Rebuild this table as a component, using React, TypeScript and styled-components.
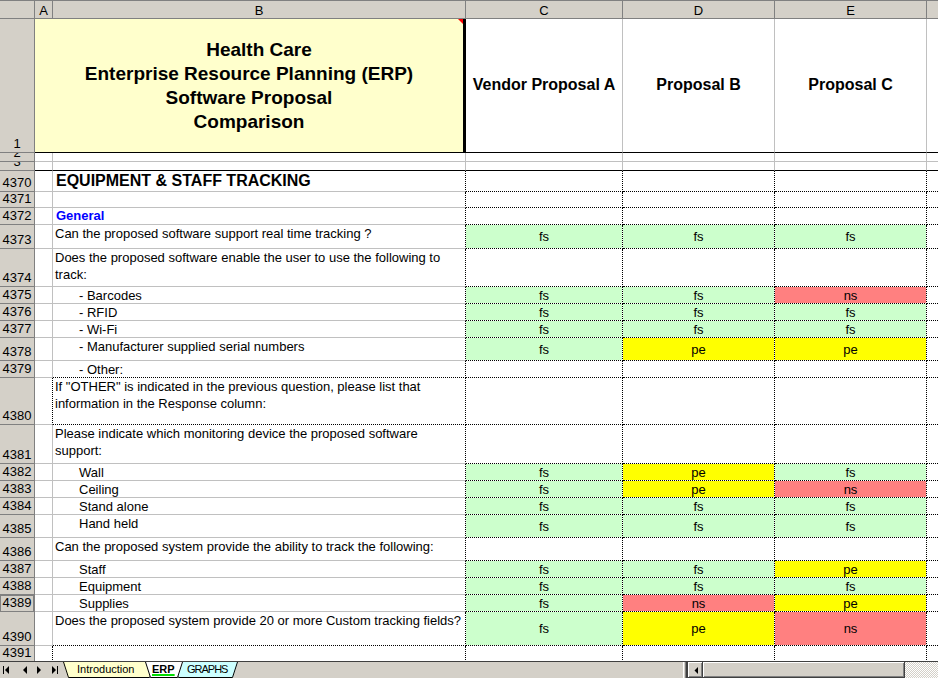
import React from 'react';
import styled, { createGlobalStyle } from 'styled-components';

const GlobalStyle = createGlobalStyle`
  *, *::before, *::after { box-sizing: border-box; }
  html, body { margin: 0; padding: 0; background: #ffffff; }
  body { font-family: "Liberation Sans", Arial, sans-serif; color: #000; overflow: hidden; }
  #root { width: 938px; height: 678px; }
`;

const COLS = '35px 18px 413px 157px 152px 152px 1fr';
const FACE = '#d4d0c8';

const lines = {
  grid: '1px solid #c0c0c0',
  dot: '1px dotted #000000',
  black: '1px solid #000000',
  none: '0 none',
};
type Line = keyof typeof lines;

const FILLS: Record<string, string> = {
  fs: '#ccffcc',
  pe: '#ffff00',
  ns: '#ff8080',
};

const Window = styled.div`
  width: 938px;
  height: 678px;
  display: flex;
  flex-direction: column;
  overflow: hidden;
  background: #ffffff;
`;

const Sheet = styled.div`
  height: 661px;
  flex: none;
  display: flex;
  flex-direction: column;
  overflow: hidden;
  border-top: 1px solid #808080;
`;

const GridRow = styled.div<{ $h: number }>`
  display: grid;
  grid-template-columns: ${COLS};
  height: ${(p) => p.$h}px;
  flex: none;
`;

const ColHead = styled.div<{ $last?: boolean }>`
  background: ${FACE};
  border-right: ${(p) => (p.$last ? '0 none' : '1px solid #808080')};
  border-bottom: 1px solid #808080;
  font-size: 13px;
  line-height: 17px;
  padding-top: 1px;
  text-align: center;
  overflow: hidden;
`;

const RowHead = styled.div<{ $selected?: boolean }>`
  background: ${FACE};
  border-right: 1px solid #808080;
  border-bottom: 1px solid #808080;
  font-size: 13px;
  line-height: 16px;
  display: flex;
  align-items: flex-end;
  justify-content: center;
  overflow: hidden;
  box-shadow: ${(p) => (p.$selected ? 'inset 1px 1px 0 #808080, inset -1px 0 0 #808080' : 'none')};
`;

const Cell = styled.div<{ $r?: Line; $b?: Line; $fill?: string }>`
  overflow: hidden;
  min-width: 0;
  border-right: ${(p) => lines[p.$r ?? 'grid']};
  border-bottom: ${(p) => lines[p.$b ?? 'grid']};
  background-color: ${(p) => p.$fill ?? 'transparent'};
  background-clip: padding-box;
`;

type Kind = 'section' | 'sub' | 'q' | 'item';

const TextCell = styled(Cell)<{ $kind?: Kind }>`
  white-space: pre;
  font-size: ${(p) => (p.$kind === 'section' ? 16 : 13)}px;
  font-weight: ${(p) => (p.$kind === 'section' || p.$kind === 'sub' ? 700 : 400)};
  color: ${(p) => (p.$kind === 'sub' ? '#0000ff' : '#000')};
  line-height: ${(p) => (p.$kind === 'section' ? 20 : p.$kind === 'sub' ? 16 : 17)}px;
  padding-left: ${(p) => (p.$kind === 'item' ? 26 : p.$kind === 'q' ? 2 : 3)}px;
`;

const ValueCell = styled(Cell)`
  display: flex;
  align-items: center;
  justify-content: center;
  font-size: 13px;
  line-height: 15px;
`;

const TitleCell = styled.div`
  position: relative;
  grid-column: span 2;
  background: #ffffcc;
  border-right: 3px solid #000;
  border-bottom: 1px solid #000;
  display: flex;
  flex-direction: column;
  align-items: center;
  justify-content: center;
  font-size: 19px;
  font-weight: 700;
  line-height: 24px;
  padding-top: 1px;
  &::after {
    content: '';
    position: absolute;
    top: 0;
    right: 0;
    border-top: 5px solid #ff0000;
    border-left: 5px solid transparent;
  }
`;

const TitleLine = styled.div<{ $shift?: number }>`
  white-space: nowrap;
  margin-left: ${(p) => p.$shift ?? 0}px;
`;

const ProposalHead = styled(Cell)`
  display: flex;
  align-items: center;
  justify-content: center;
  font-size: 16px;
  font-weight: 700;
  white-space: nowrap;
  padding-bottom: 1px;
`;

/* ---------- bottom bar ---------- */

const TabBar = styled.div`
  height: 17px;
  flex: none;
  display: flex;
  align-items: stretch;
  background: ${FACE};
  border-top: 1px solid #404040;
`;

const Nav = styled.div`
  width: 63px;
  flex: none;
  display: flex;
  align-items: center;
  padding-left: 3px;
  padding-bottom: 1px;
`;

const NavButton = styled.span<{ $ml: number }>`
  display: flex;
  margin-left: ${(p) => p.$ml}px;
`;

const Tabs = styled.div`
  display: flex;
  flex: none;
`;

const Tab = styled.div<{ $w: number; $ml: number; $z: number }>`
  position: relative;
  flex: none;
  width: ${(p) => p.$w}px;
  height: 16px;
  margin-left: ${(p) => p.$ml}px;
  z-index: ${(p) => p.$z};
`;

const TabShape = styled.svg`
  position: absolute;
  left: 0;
  top: 0;
`;

const TabLabel = styled.span<{ $pl: number; $active?: boolean; $ls?: number }>`
  position: relative;
  display: block;
  padding-left: ${(p) => p.$pl}px;
  font-size: 11px;
  line-height: 15px;
  letter-spacing: ${(p) => p.$ls ?? 0}px;
  font-weight: ${(p) => (p.$active ? 700 : 400)};
  white-space: nowrap;
  text-decoration: ${(p) => (p.$active ? 'underline' : 'none')};
  text-decoration-color: #00dd00;
  text-decoration-thickness: 2px;
  text-underline-offset: 1px;
`;

const Spacer = styled.div`
  flex: 1;
`;

const ScrollArea = styled.div`
  width: 255px;
  flex: none;
  display: flex;
  align-items: stretch;
`;

const Splitter = styled.div`
  width: 5px;
  flex: none;
  border-left: 1px solid #ffffff;
  border-right: 2px solid #404040;
  background: ${FACE};
  box-shadow: inset -1px 0 0 #808080;
`;

const ScrollButton = styled.div`
  width: 15px;
  flex: none;
  display: flex;
  align-items: center;
  justify-content: center;
  background: ${FACE};
  box-shadow: inset -1px -1px 0 #404040, inset 1px 1px 0 #ffffff, inset -2px -2px 0 #808080;
`;

const Thumb = styled.div`
  width: 202px;
  flex: none;
  background: ${FACE};
  box-shadow: inset -1px -1px 0 #404040, inset 1px 1px 0 #ffffff, inset -2px -2px 0 #808080;
`;

const Track = styled.div`
  flex: 1;
  background: repeating-conic-gradient(#ffffff 0 25%, ${FACE} 0 50%) 0 0 / 2px 2px;
`;

/* ---------- data ---------- */

type V = 'fs' | 'pe' | 'ns';
interface RowData {
  n: number;
  h: number;
  kind?: Kind;
  text?: string;
  vals?: V[];
  dotBottom?: boolean;
  dotLeft?: boolean;
  selected?: boolean;
}

const rows: RowData[] = [
  { n: 4370, h: 21, kind: 'section', text: 'EQUIPMENT & STAFF TRACKING' },
  { n: 4371, h: 16 },
  { n: 4372, h: 17, kind: 'sub', text: 'General' },
  { n: 4373, h: 24, kind: 'q', text: 'Can the proposed software support real time tracking ?', vals: ['fs', 'fs', 'fs'] },
  { n: 4374, h: 38, kind: 'q', text: 'Does the proposed software enable the user to use the following to\ntrack:' },
  { n: 4375, h: 17, kind: 'item', text: '- Barcodes', vals: ['fs', 'fs', 'ns'] },
  { n: 4376, h: 17, kind: 'item', text: '- RFID', vals: ['fs', 'fs', 'fs'] },
  { n: 4377, h: 17, kind: 'item', text: '- Wi-Fi', vals: ['fs', 'fs', 'fs'] },
  { n: 4378, h: 23, kind: 'item', text: '- Manufacturer supplied serial numbers', vals: ['fs', 'pe', 'pe'] },
  { n: 4379, h: 17, kind: 'item', text: '- Other:', dotBottom: true },
  {
    n: 4380,
    h: 47,
    kind: 'q',
    text: 'If "OTHER" is indicated in the previous question, please list that\ninformation in the Response column:',
    dotBottom: true,
    dotLeft: true,
  },
  { n: 4381, h: 39, kind: 'q', text: 'Please indicate which monitoring device the proposed software\nsupport:' },
  { n: 4382, h: 17, kind: 'item', text: 'Wall', vals: ['fs', 'pe', 'fs'] },
  { n: 4383, h: 17, kind: 'item', text: 'Ceiling', vals: ['fs', 'pe', 'ns'] },
  { n: 4384, h: 17, kind: 'item', text: 'Stand alone', vals: ['fs', 'fs', 'fs'] },
  { n: 4385, h: 23, kind: 'item', text: 'Hand held', vals: ['fs', 'fs', 'fs'] },
  { n: 4386, h: 23, kind: 'q', text: 'Can the proposed system provide the ability to track the following:' },
  { n: 4387, h: 17, kind: 'item', text: 'Staff', vals: ['fs', 'fs', 'pe'] },
  { n: 4388, h: 17, kind: 'item', text: 'Equipment', vals: ['fs', 'fs', 'fs'] },
  { n: 4389, h: 17, kind: 'item', text: 'Supplies', vals: ['fs', 'ns', 'pe'], selected: true },
  {
    n: 4390,
    h: 34,
    kind: 'q',
    text: 'Does the proposed system provide 20 or more Custom tracking fields?',
    vals: ['fs', 'pe', 'ns'],
    dotBottom: true,
  },
  { n: 4391, h: 16, dotLeft: true },
];

const NavIcon = ({ dir, bar }: { dir: 'l' | 'r'; bar?: boolean }) => (
  <svg width="7" height="8" viewBox="0 0 7 8">
    {dir === 'l' ? (
      <>
        {bar && <rect x="0" y="0" width="1" height="8" fill="#000" />}
        <polygon points="6,0 6,8 2,4" fill="#000" />
      </>
    ) : (
      <>
        <polygon points="1,0 1,8 5,4" fill="#000" />
        {bar && <rect x="6" y="0" width="1" height="8" fill="#000" />}
      </>
    )}
  </svg>
);

const TabOutline = ({ w, fill }: { w: number; fill: string }) => (
  <TabShape width={w} height={16} viewBox={`0 0 ${w} 16`}>
    <polygon points={`0,0 ${w},0 ${w - 5},15.5 5,15.5`} fill={fill} />
    <polyline
      points={`0.5,0 5.5,15.5 ${w - 5.5},15.5 ${w - 0.5},0`}
      fill="none"
      stroke="#000"
      strokeWidth="1"
    />
  </TabShape>
);

const DataRow = ({ r }: { r: RowData }) => {
  const v = r.vals ?? [];
  return (
    <GridRow $h={r.h}>
      <RowHead $selected={r.selected}>{r.n}</RowHead>
      <Cell $r={r.dotLeft ? 'dot' : 'grid'} />
      <TextCell $kind={r.kind} $r="dot" $b={r.dotBottom ? 'dot' : 'grid'}>
        {r.text}
      </TextCell>
      {[0, 1, 2].map((i) => (
        <ValueCell key={i} $r="dot" $b="dot" $fill={v[i] ? FILLS[v[i]] : undefined}>
          {v[i] ?? ''}
        </ValueCell>
      ))}
      <Cell $r="none" $b="dot" />
    </GridRow>
  );
};

export default function App() {
  return (
    <>
      <GlobalStyle />
      <Window>
        <Sheet>
          <GridRow $h={18}>
            <ColHead />
            <ColHead>A</ColHead>
            <ColHead>B</ColHead>
            <ColHead>C</ColHead>
            <ColHead>D</ColHead>
            <ColHead>E</ColHead>
            <ColHead $last />
          </GridRow>

          <GridRow $h={134}>
            <RowHead>1</RowHead>
            <TitleCell>
              <TitleLine $shift={20}>Health Care</TitleLine>
              <TitleLine>Enterprise Resource Planning (ERP)</TitleLine>
              <TitleLine>Software Proposal</TitleLine>
              <TitleLine>Comparison</TitleLine>
            </TitleCell>
            <ProposalHead $b="black">Vendor Proposal A</ProposalHead>
            <ProposalHead $b="black">Proposal B</ProposalHead>
            <ProposalHead $b="black">Proposal C</ProposalHead>
            <Cell $r="none" $b="black" />
          </GridRow>

          {[2, 3].map((n) => (
            <GridRow key={n} $h={9}>
              <RowHead>{n}</RowHead>
              {[0, 1, 2, 3, 4].map((i) => (
                <Cell key={i} $b={n === 3 ? 'black' : 'grid'} />
              ))}
              <Cell $r="none" $b={n === 3 ? 'black' : 'grid'} />
            </GridRow>
          ))}

          {rows.map((r) => (
            <DataRow key={r.n} r={r} />
          ))}
        </Sheet>

        <TabBar>
          <Nav>
            <NavButton $ml={0}>
              <NavIcon dir="l" bar />
            </NavButton>
            <NavButton $ml={11}>
              <NavIcon dir="l" />
            </NavButton>
            <NavButton $ml={8}>
              <NavIcon dir="r" />
            </NavButton>
            <NavButton $ml={8}>
              <NavIcon dir="r" bar />
            </NavButton>
          </Nav>
          <Tabs>
            <Tab $w={92} $ml={0} $z={1}>
              <TabOutline w={92} fill="#ffffcc" />
              <TabLabel $pl={14}>Introduction</TabLabel>
            </Tab>
            <Tab $w={38} $ml={-10} $z={3}>
              <TabOutline w={38} fill="#ffffff" />
              <TabLabel $pl={7} $active>
                ERP
              </TabLabel>
            </Tab>
            <Tab $w={65} $ml={-10} $z={2}>
              <TabOutline w={65} fill="#ccffff" />
              <TabLabel $pl={14} $ls={-1}>
                GRAPHS
              </TabLabel>
            </Tab>
          </Tabs>
          <Spacer />
          <ScrollArea>
            <Splitter />
            <ScrollButton>
              <svg width="4" height="7" viewBox="0 0 4 7">
                <polygon points="4,0 4,7 0.5,3.5" fill="#000" />
              </svg>
            </ScrollButton>
            <Thumb />
            <Track />
          </ScrollArea>
        </TabBar>
      </Window>
    </>
  );
}
